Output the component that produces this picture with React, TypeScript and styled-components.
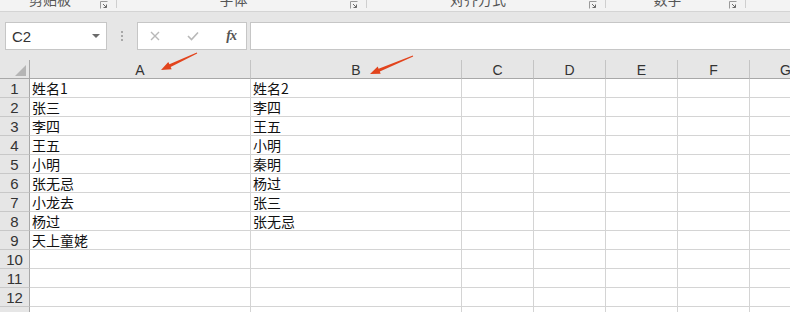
import React from "react";
import styled, { createGlobalStyle } from "styled-components";

const Global = createGlobalStyle`
  html, body { margin: 0; padding: 0; background: #ffffff; }
  body { font-family: "Noto Sans CJK SC", "Liberation Sans", sans-serif; }
`;

const Page = styled.div`
  position: relative;
  width: 790px;
  height: 312px;
  overflow: hidden;
  background: #e6e6e6;
`;

const RibbonStrip = styled.div`
  display: flex;
  height: 11px;
  background: #f3f3f3;
  border-bottom: 1px solid #d4d4d4;
  overflow: hidden;
`;

const Group = styled.div<{ $w: number }>`
  position: relative;
  flex: 0 0 ${(p) => p.$w}px;
  display: flex;
  height: 11px;
`;

const GroupLabel = styled.div`
  flex: 1;
  text-align: center;
  font-size: 14px;
  line-height: 14px;
  margin-top: -8px;
  color: #555;
  font-family: "Noto Sans CJK SC", sans-serif;
`;

const Launcher = styled.div`
  flex: 0 0 16px;
  display: flex;
  align-items: flex-start;
  padding-top: 1px;
  box-sizing: border-box;
`;

const Separator = styled.div`
  flex: 0 0 1px;
  height: 8px;
  background: #cfcfcf;
`;

const FormulaBar = styled.div`
  display: flex;
  align-items: stretch;
  height: 28px;
  padding: 10px 0 10px 5px;
`;

const NameBox = styled.div`
  flex: 0 0 102px;
  box-sizing: border-box;
  border: 1px solid #c6c6c6;
  background: #fff;
  display: flex;
  align-items: center;
  justify-content: space-between;
  padding: 0 6px 0 6px;
  font-family: "Liberation Sans", sans-serif;
  font-size: 15px;
  color: #333;
`;

const DropArrow = styled.div`
  width: 0;
  height: 0;
  border-left: 4px solid transparent;
  border-right: 4px solid transparent;
  border-top: 4px solid #6b6b6b;
`;

const DotsArea = styled.div`
  flex: 0 0 30px;
  display: flex;
  flex-direction: column;
  align-items: center;
  justify-content: center;
  gap: 2px;
`;

const Dot = styled.div`
  width: 2px;
  height: 2px;
  background: #a8a8a8;
`;

const FuncBox = styled.div`
  flex: 0 0 110px;
  box-sizing: border-box;
  border: 1px solid #c6c6c6;
  background: #fff;
  display: flex;
  align-items: center;
  padding: 0 10px 0 12px;
  justify-content: space-between;
`;

const FxText = styled.span`
  font-family: "Liberation Serif", serif;
  font-style: italic;
  font-weight: bold;
  font-size: 14px;
  color: #555;
  letter-spacing: -1px;
`;

const FormulaInput = styled.div`
  flex: 1;
  margin-left: 3px;
  box-sizing: border-box;
  border: 1px solid #c6c6c6;
  border-right: none;
  background: #fff;
`;

const Sheet = styled.div`
  display: grid;
  grid-template-columns: 30px 221px 211px 72px 72px 72px 72px 72px 1fr;
  grid-auto-rows: 19px;
  background: #fff;
`;

const Corner = styled.div`
  box-sizing: border-box;
  background: #e6e6e6;
  border-right: 1px solid #a8a8a8;
  border-bottom: 1px solid #a8a8a8;
  display: flex;
  align-items: flex-end;
  justify-content: flex-end;
  padding: 0 3px 2px 0;
`;

const ColHeader = styled.div`
  box-sizing: border-box;
  background: #e6e6e6;
  border-right: 1px solid #c4c4c4;
  border-bottom: 1px solid #a8a8a8;
  text-align: center;
  font-family: "Liberation Sans", sans-serif;
  font-size: 14px;
  line-height: 18px;
  color: #333;
  padding-top: 1px;
`;

const RowHeader = styled.div`
  box-sizing: border-box;
  background: #e6e6e6;
  border-right: 1px solid #a8a8a8;
  border-bottom: 1px solid #c8c8c8;
  text-align: center;
  font-family: "Liberation Sans", sans-serif;
  font-size: 15px;
  line-height: 19px;
  color: #333;
`;

const Cell = styled.div`
  box-sizing: border-box;
  border-right: 1px solid #d4d4d4;
  border-bottom: 1px solid #d4d4d4;
  padding-left: 2px;
  font-family: "Noto Sans CJK SC", sans-serif;
  font-size: 14px;
  line-height: 19px;
  color: #111;
  white-space: nowrap;
  overflow: hidden;
`;

const Arrows = styled.svg`
  position: absolute;
  left: 0;
  top: 0;
  pointer-events: none;
`;

const LauncherIcon = () => (
  <svg width="8" height="8" viewBox="0 0 8 8">
    <path d="M0.5 7.5 V0.5 H7.5" fill="none" stroke="#9a9a9a" strokeWidth="1" />
    <path d="M3 3 L6.5 6.5 M6.5 3.5 V6.5 H3.5" fill="none" stroke="#6a6a6a" strokeWidth="1" />
  </svg>
);

const groups = [
  { w: 116, label: "剪贴板" },
  { w: 249, label: "字体" },
  { w: 238, label: "对齐方式" },
  { w: 139, label: "数字" },
];

const cols = ["A", "B", "C", "D", "E", "F", "G", "H"];
const colA = ["姓名1", "张三", "李四", "王五", "小明", "张无忌", "小龙去", "杨过", "天上童姥"];
const colB = ["姓名2", "李四", "王五", "小明", "秦明", "杨过", "张三", "张无忌"];

export default function App() {
  const rows = Array.from({ length: 14 }, (_, i) => i + 1);
  return (
    <Page>
      <Global />
      <RibbonStrip>
        {groups.map((g) => (
          <React.Fragment key={g.label}>
            <Group $w={g.w}>
              <GroupLabel>{g.label}</GroupLabel>
              <Launcher>
                <LauncherIcon />
              </Launcher>
            </Group>
            <Separator />
          </React.Fragment>
        ))}
      </RibbonStrip>
      <FormulaBar>
        <NameBox>
          <span>C2</span>
          <DropArrow />
        </NameBox>
        <DotsArea>
          <Dot />
          <Dot />
          <Dot />
        </DotsArea>
        <FuncBox>
          <svg width="10" height="10" viewBox="0 0 10 10">
            <path d="M1 1 L9 9 M9 1 L1 9" stroke="#b8b8b8" strokeWidth="1.4" />
          </svg>
          <svg width="12" height="10" viewBox="0 0 12 10">
            <path d="M1 5 L4.5 8.5 L11 1.5" fill="none" stroke="#b8b8b8" strokeWidth="1.6" />
          </svg>
          <FxText>fx</FxText>
        </FuncBox>
        <FormulaInput />
      </FormulaBar>
      <Sheet>
        <Corner>
          <svg width="11" height="11" viewBox="0 0 11 11">
            <polygon points="11,0 11,11 0,11" fill="#b5b5b5" />
          </svg>
        </Corner>
        {cols.map((c) => (
          <ColHeader key={c}>{c}</ColHeader>
        ))}
        {rows.map((r) => (
          <React.Fragment key={r}>
            <RowHeader>{r}</RowHeader>
            <Cell>{colA[r - 1] ?? ""}</Cell>
            <Cell>{colB[r - 1] ?? ""}</Cell>
            {cols.slice(2).map((c) => (
              <Cell key={c} />
            ))}
          </React.Fragment>
        ))}
      </Sheet>
      <Arrows width="790" height="312" viewBox="0 0 790 312">
        <polygon
          points="196.8,52.5 169.4,64.3 168.3,62.1 161,70 171.7,69.3 170.6,67.1 197.2,53.5"
          fill="#e2441d"
        />
        <polygon
          points="412.8,55.5 378.6,68.7 377.7,66.4 370,74 380.7,73.8 379.8,71.5 413.2,56.5"
          fill="#e2441d"
        />
      </Arrows>
    </Page>
  );
}
